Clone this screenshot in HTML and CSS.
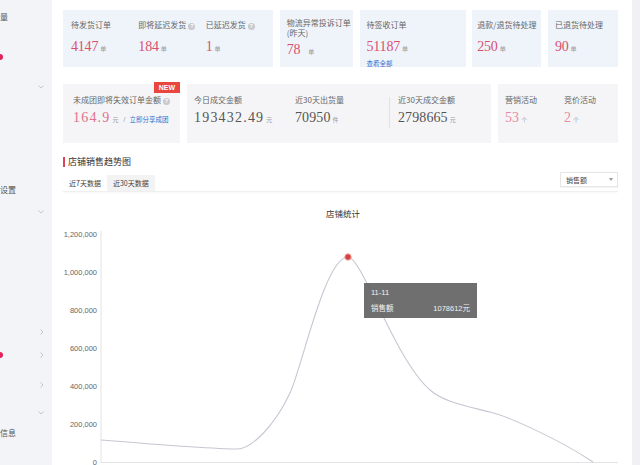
FILE: index.html
```html
<!DOCTYPE html>
<html lang="zh-CN">
<head>
<meta charset="utf-8">
<title>店铺概况</title>
<link rel="stylesheet" href="styles.css">
</head>
<body>
<div class="app">
  <aside class="sidebar">
    <div class="s-text s-1">量</div>
    <div class="s-dot s-2"></div>
    <div class="s-chev s-3"><svg width="6" height="4" viewBox="0 0 6 4"><polyline points="0.5,0.5 3,3 5.5,0.5" /></svg></div>
    <div class="s-text s-4">设置</div>
    <div class="s-chev s-5"><svg width="6" height="4" viewBox="0 0 6 4"><polyline points="0.5,0.5 3,3 5.5,0.5" /></svg></div>
    <div class="s-chev s-right s-6"><svg width="4" height="6" viewBox="0 0 4 6"><polyline points="0.5,0.5 3,3 0.5,5.5" /></svg></div>
    <div class="s-pair s-7">
      <div class="s-dot"></div>
      <div class="s-chev s-right"><svg width="4" height="6" viewBox="0 0 4 6"><polyline points="0.5,0.5 3,3 0.5,5.5" /></svg></div>
    </div>
    <div class="s-chev s-right s-8"><svg width="4" height="6" viewBox="0 0 4 6"><polyline points="0.5,0.5 3,3 0.5,5.5" /></svg></div>
    <div class="s-chev s-9"><svg width="6" height="4" viewBox="0 0 6 4"><polyline points="0.5,0.5 3,3 5.5,0.5" /></svg></div>
    <div class="s-text s-10">信息</div>
  </aside>

  <main class="main">
    <div class="row row1">
      <div class="card blue multi c-a">
        <div class="col">
          <div class="lbl">待发货订单</div>
          <div class="num">4147<span class="unit">单</span></div>
        </div>
        <div class="col">
          <div class="lbl">即将延迟发货<span class="q">?</span></div>
          <div class="num">184<span class="unit">单</span></div>
        </div>
        <div class="col">
          <div class="lbl">已延迟发货<span class="q">?</span></div>
          <div class="num">1<span class="unit">单</span></div>
        </div>
      </div>
      <div class="card blue c-b">
        <div class="lbl">物流异常投诉订单<br>(昨天)</div>
        <div class="num num-b">78<span class="unit wide">单</span></div>
      </div>
      <div class="card blue c-c">
        <div class="lbl">待签收订单</div>
        <div class="num">51187<span class="unit">单</span></div>
        <a class="link">查看全部</a>
      </div>
      <div class="card blue c-d">
        <div class="lbl">退款/退货待处理</div>
        <div class="num">250<span class="unit">单</span></div>
      </div>
      <div class="card blue c-e">
        <div class="lbl">已退货待处理</div>
        <div class="num">90<span class="unit">单</span></div>
      </div>
    </div>

    <div class="row row2">
      <div class="card gray c-f">
        <span class="badge">NEW</span>
        <div class="lbl">未成团即将失效订单金额<span class="q">?</span></div>
        <div class="num num2 pink dec">164.9<span class="unit">元</span><span class="slash">/</span><a class="link inline">立即分享成团</a></div>
      </div>
      <div class="card gray multi c-g">
        <div class="col g1">
          <div class="lbl">今日成交金额</div>
          <div class="num num2 dark dec">193432.49<span class="unit">元</span></div>
        </div>
        <div class="col g2">
          <div class="lbl">近30天出货量</div>
          <div class="num num2 dark">70950<span class="unit">件</span></div>
        </div>
        <div class="sep"></div>
        <div class="col g3">
          <div class="lbl">近30天成交金额</div>
          <div class="num num2 dark">2798665<span class="unit">元</span></div>
        </div>
      </div>
      <div class="card gray multi c-h">
        <div class="col h1">
          <div class="lbl">营销活动</div>
          <div class="num num2 light">53<span class="unit">个</span></div>
        </div>
        <div class="col">
          <div class="lbl">竞价活动</div>
          <div class="num num2 light">2<span class="unit">个</span></div>
        </div>
      </div>
    </div>

    <section class="trend">
      <h2 class="sec-title">店铺销售趋势图</h2>
      <div class="tabbar">
        <div class="tabs">
          <span class="tab active">近7天数据</span>
          <span class="tab">近30天数据</span>
        </div>
        <div class="select"><span>销售额</span><span class="caret"></span></div>
      </div>
      <div class="chart">
        <svg class="plot" width="555" height="273" viewBox="63 192 555 273">
          <text class="c-title" x="326" y="213">店铺统计</text>
          <g class="ylab">
            <text x="97" y="234">1,200,000</text>
            <text x="97" y="272">1,000,000</text>
            <text x="97" y="310">800,000</text>
            <text x="97" y="348">600,000</text>
            <text x="97" y="386">400,000</text>
            <text x="97" y="424">200,000</text>
            <text x="97" y="462">0</text>
          </g>
          <line class="axis" x1="101" y1="231" x2="101" y2="462.5"/>
          <line class="axis" x1="101" y1="462.5" x2="618" y2="462.5"/>
          <path class="curve" d="M101,440 C150,444 215,449 237,449 C252,449 275,425 290,393 C302,367.4 325,257 348,257 C362,257 395,360 430,390 C445,403 470,407 490,412 C510,417 560,440 593,462"/>
          <circle class="dot" cx="348" cy="257" r="3.2"/>
        </svg>
        <div class="tooltip">
          <div class="tt-row">11-11</div>
          <div class="tt-row split"><span>销售额</span><span>1078612元</span></div>
        </div>
      </div>
    </section>
  </main>

  <div class="rail"></div>
</div>
</body>
</html>
```

FILE: styles.css
```css
html, body {
  margin: 0;
  padding: 0;
  background: #fff;
  overflow: hidden;
}
body {
  font-family: "Noto Sans CJK SC", "Noto Sans", sans-serif;
  color: #333;
}
.app {
  display: flex;
  width: 640px;
  height: 465px;
  overflow: hidden;
}

/* ---------- sidebar ---------- */
.sidebar {
  width: 52px;
  flex: none;
  background: #f3f4f7;
  display: flex;
  flex-direction: column;
  overflow: hidden;
  font-size: 8px;
  color: #555;
}
.s-text {
  line-height: 10px;
  height: 10px;
  white-space: nowrap;
}
.s-dot {
  width: 6px;
  height: 6px;
  border-radius: 50%;
  background: #e0245a;
  margin-left: -3px;
}
.s-chev {
  margin-left: 38px;
  height: 4px;
  line-height: 0;
}
.s-chev.s-right {
  height: 6px;
  margin-left: 40px;
}
.s-chev polyline {
  fill: none;
  stroke: #c4c6cc;
  stroke-width: 1;
}
.s-pair {
  display: flex;
  justify-content: space-between;
  height: 10px;
}
.s-pair .s-dot { align-self: flex-start; margin-top: 1px; }
.s-pair .s-chev { align-self: flex-end; margin-left: 0; margin-right: 8px; margin-bottom: 3px; }
.s-1 { margin-top: 12px; }
.s-2 { margin-top: 32px; }
.s-3 { margin-top: 25px; }
.s-4 { margin-top: 96px; }
.s-5 { margin-top: 15px; }
.s-6 { margin-top: 115px; }
.s-7 { margin-top: 16px; }
.s-8 { margin-top: 21px; }
.s-9 { margin-top: 23px; }
.s-10 { margin-top: 13px; }

/* ---------- main ---------- */
.main {
  width: 580px;
  flex: none;
  box-sizing: border-box;
  padding: 10px 14px 0 11px;
}
.rail {
  flex: 1;
  background: #f1f1f3;
}
.row {
  display: flex;
  justify-content: space-between;
}
.row1 { height: 57px; }
.row2 { height: 59px; margin-top: 17px; }

.card {
  box-sizing: border-box;
  padding: 10px 0 0 7px;
  position: relative;
}
.card.blue { background: #eff4fb; }
.card.gray { background: #f5f5f7; }
.card.multi { display: flex; }

.c-a { width: 210px; padding-left: 8px; }
.c-a .col { width: 70px; }
.c-b { width: 73px; padding-top: 8px; }
.c-c { width: 106px; }
.c-d { width: 69px; padding-left: 5px; }
.c-e { width: 70px; }

.c-f { width: 117px; padding: 11px 0 0 10px; }
.c-g { width: 304px; padding-top: 11px; }
.c-h { width: 120px; padding-top: 11px; }
.g1 { width: 101px; }
.g2 { width: 94px; }
.g3 { padding-left: 8px; }
.h1 { width: 59px; }
.sep {
  width: 1px;
  height: 31px;
  margin-top: 2px;
  background: #e2e2e6;
}

.lbl {
  font-size: 8px;
  line-height: 10px;
  color: #666;
  white-space: nowrap;
}
.q {
  display: inline-block;
  width: 7px;
  height: 7px;
  border-radius: 50%;
  background: #c9c9cc;
  color: #fff;
  font-family: "Liberation Sans", sans-serif;
  font-size: 5.5px;
  font-weight: bold;
  line-height: 7px;
  text-align: center;
  margin-left: 2px;
  vertical-align: 0;
}
.num {
  font-family: "Liberation Serif", serif;
  font-size: 14px;
  line-height: 16px;
  margin-top: 9px;
  color: #d9506e;
  white-space: nowrap;
  letter-spacing: -0.2px;
}
.num-b { margin-top: 4px; }
.num2 { margin-top: 5px; letter-spacing: 0.1px; }
.num.dec { letter-spacing: 1.2px; }
.num.pink { color: #e0718a; }
.num.dark { color: #555; }
.num.light { color: #e88aa0; }
.unit {
  font-family: "Noto Sans CJK SC", sans-serif;
  font-size: 6px;
  color: #999;
  margin-left: 2px;
  letter-spacing: 0;
}
.unit.wide { margin-left: 8px; }
.slash {
  font-family: "Liberation Sans", sans-serif;
  font-size: 7px;
  color: #999;
  margin: 0 4px 0 5px;
  letter-spacing: 0;
}
.link {
  display: block;
  font-size: 6.5px;
  line-height: 8px;
  color: #2f6fd0;
  margin-top: 2px;
  letter-spacing: 0;
}
.link.inline {
  display: inline;
  font-family: "Noto Sans CJK SC", sans-serif;
  margin: 0;
}
.badge {
  position: absolute;
  top: -2px;
  right: 0;
  background: #e8463e;
  color: #fff;
  font-family: "Liberation Sans", sans-serif;
  font-size: 7px;
  font-weight: bold;
  line-height: 11px;
  padding: 0 5px;
}

/* ---------- trend ---------- */
.sec-title {
  margin: 14px 0 0;
  font-size: 9px;
  line-height: 10px;
  font-weight: normal;
  color: #333;
  border-left: 2px solid #d9455f;
  padding-left: 3px;
}
.tabbar {
  margin-top: 5px;
  height: 20px;
  box-sizing: border-box;
  display: flex;
  justify-content: space-between;
  border-bottom: 1px solid #efefef;
  box-shadow: 0 1px 2px rgba(0, 0, 0, 0.03);
}
.tabs {
  display: flex;
  align-self: flex-end;
}
.tab {
  font-size: 7px;
  line-height: 16px;
  padding: 0 6px;
  color: #444;
  background: #f3f3f4;
}
.tab.active { background: #fff; }
.select {
  width: 58px;
  height: 15px;
  box-sizing: border-box;
  border: 1px solid #e6e6e6;
  background: #fff;
  display: flex;
  align-items: center;
  justify-content: space-between;
  padding: 0 4px 0 5px;
  font-size: 7px;
  color: #444;
  box-shadow: 0 1px 1px rgba(0, 0, 0, 0.04);
}
.caret {
  width: 0;
  height: 0;
  border-top: 3px solid #999;
  border-left: 2.5px solid transparent;
  border-right: 2.5px solid transparent;
}
.chart {
  position: relative;
  height: 273px;
}
.plot { display: block; }
.c-title {
  font-family: "Noto Sans CJK SC", sans-serif;
  font-size: 8.5px;
  fill: #333;
  dominant-baseline: central;
}
.ylab text {
  font-family: "Liberation Sans", sans-serif;
  font-size: 7.5px;
  fill: #666;
  text-anchor: end;
  dominant-baseline: central;
}
.axis {
  stroke: #e3e3e6;
  stroke-width: 1;
}
.curve {
  fill: none;
  stroke: #c5c8d2;
  stroke-width: 1.1;
}
.dot {
  fill: #d7403f;
  stroke: #eea3a3;
  stroke-width: 1;
}
.tooltip {
  position: absolute;
  left: 301px;
  top: 91px;
  width: 113px;
  height: 35px;
  box-sizing: border-box;
  padding: 5px 7px;
  background: rgba(95, 95, 95, 0.9);
  color: #f2f2f2;
  font-family: "Liberation Sans", "Noto Sans CJK SC", sans-serif;
  font-size: 7.5px;
}
.tt-row { line-height: 10px; }
.tt-row.split {
  display: flex;
  justify-content: space-between;
  margin-top: 6px;
}
```
